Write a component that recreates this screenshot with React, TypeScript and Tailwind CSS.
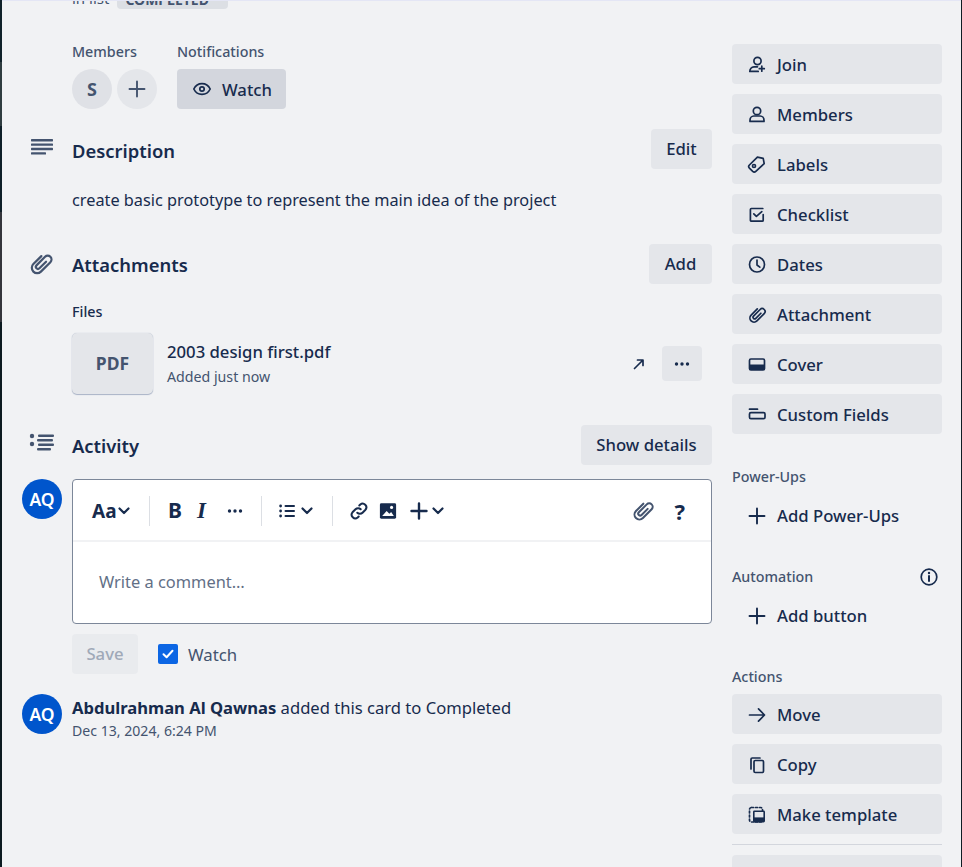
import type { ReactNode } from "react";

const s = { fill: "none", stroke: "currentColor", strokeWidth: 1.7, strokeLinecap: "round", strokeLinejoin: "round" } as const;

function Ico({ size = 20, children, className = "" }: { size?: number; children: ReactNode; className?: string }) {
  return (
    <svg width={size} height={size} viewBox="0 0 20 20" className={`shrink-0 ${className}`}>
      {children}
    </svg>
  );
}

const Clip = ({ size = 20, className = "" }: { size?: number; className?: string }) => (
  <Ico size={size} className={className}>
    <g transform="rotate(45 10 10)" {...s}>
      <path d="M5.9 5.5V14.2a4.1 4.1 0 0 0 8.2 0V3.9a2.9 2.9 0 0 0-5.8 0V13.2a1.6 1.6 0 0 0 3.2 0V6" />
    </g>
  </Ico>
);

const Plus = ({ size = 20 }: { size?: number }) => (
  <Ico size={size}>
    <path d="M10 2.5v15M2.5 10h15" {...s} strokeWidth={1.9} />
  </Ico>
);

const Chev = () => (
  <svg width="12" height="8" viewBox="0 0 12 8" className="shrink-0">
    <path d="M1.5 1.5 6 6l4.5-4.5" {...s} strokeWidth={2.2} />
  </svg>
);

const Dots = () => (
  <svg width="16" height="4" viewBox="0 0 16 4" className="shrink-0">
    <circle cx="2.5" cy="2" r="1.7" fill="currentColor" />
    <circle cx="8" cy="2" r="1.7" fill="currentColor" />
    <circle cx="13.5" cy="2" r="1.7" fill="currentColor" />
  </svg>
);

const sideActions: [string, ReactNode][] = [
  ["Join", <Ico><circle cx="10.5" cy="6" r="3.6" {...s} /><path d="M10.5 11.8H7C4.5 11.8 2.8 14 2.8 16.4h8.4M14.8 11.2v5M12.3 13.7h5" {...s} /></Ico>],
  ["Members", <Ico><circle cx="10" cy="6" r="3.7" {...s} /><path d="M6.8 11h6.4c2.2 0 3.8 2 3.8 4.2v1.2H3v-1.2C3 13 4.6 11 6.8 11z" {...s} /></Ico>],
  ["Labels", <Ico><path d="M10.4 2.2l5.8 1.2 1 5.2L8.8 16.4a2.3 2.3 0 0 1-3.1 0l-3.3-3.2a2.3 2.3 0 0 1 0-3.2z" {...s} /><circle cx="7" cy="11" r="1.5" {...s} /></Ico>],
  ["Checklist", <Ico><path d="M15.8 3.5H4.4a1 1 0 0 0-1 1v10.7a1 1 0 0 0 1 1h10.8a1 1 0 0 0 1-1V9.5" {...s} /><path d="M6.8 8.8l2.6 2.6 5.4-4.8" {...s} /></Ico>],
  ["Dates", <Ico><circle cx="10" cy="9.5" r="7.5" {...s} /><path d="M10 5v5l2.8 2.2" {...s} /></Ico>],
  ["Attachment", <Clip />],
  ["Cover", <Ico><rect x="2.5" y="4" width="15" height="11" rx="1.4" {...s} /><rect x="2.5" y="9.5" width="15" height="5.5" fill="currentColor" /></Ico>],
  ["Custom Fields", <Ico><path d="M2.5 4.2h8" {...s} /><rect x="2.5" y="7.6" width="15.5" height="6" rx="1.4" {...s} /></Ico>],
];

const moreActions: [string, ReactNode][] = [
  ["Move", <Ico><path d="M2.5 10h14.5M11.5 3.8 17.5 10l-6 6.2" {...s} /></Ico>],
  ["Copy", <Ico><rect x="7" y="5.5" width="9.5" height="12" rx="1.2" {...s} /><path d="M4 14V4.2A1.2 1.2 0 0 1 5.2 3H13" {...s} /></Ico>],
  ["Make template", <Ico><rect x="2.5" y="2.5" width="13" height="14.5" rx="2" {...s} strokeDasharray="2 2" /><rect x="6" y="5.5" width="12" height="12" rx="1.4" fill="currentColor" /><rect x="7.6" y="7" width="8.8" height="5.4" fill="#e4e6ea" /></Ico>],
];

function SideButton({ label, icon, filled = true }: { label: string; icon: ReactNode; filled?: boolean }) {
  return (
    <div className={`flex h-10 items-center gap-2.5 rounded-[4px] pl-[15px] text-[16.7px] font-medium text-[#172b4d] ${filled ? "bg-[#e4e6ea] pt-px" : ""}`}>
      {icon}
      <span>{label}</span>
    </div>
  );
}

function Pill({ children, className = "" }: { children: ReactNode; className?: string }) {
  return (
    <div className={`flex h-10 items-center justify-center rounded-[4px] bg-[#e4e6ea] text-[16.7px] font-medium text-[#172b4d] ${className}`}>
      {children}
    </div>
  );
}

function Avatar() {
  return (
    <div className="flex h-10 w-10 shrink-0 items-center justify-center rounded-full bg-[#0055cc] text-[17.5px] font-semibold text-white">
      AQ
    </div>
  );
}

function Sep({ className = "" }: { className?: string }) {
  return <div className={`h-[30px] w-px shrink-0 bg-[#dcdfe4] ${className}`} />;
}

function Toolbar() {
  return (
    <div className="flex h-[62px] items-center border-b-2 border-[#f1f2f4] pl-[19px] pt-[2px] text-[#172b4d]">
      <span className="w-[26px] text-[19px] font-bold">Aa</span>
      <Chev />
      <Sep className="ml-[19px]" />
      <span className="ml-[18px] w-[14px] text-[21px] font-bold">B</span>
      <span className="ml-[15px] w-[15px] font-['Liberation_Serif',serif] text-[23px] font-bold italic">I</span>
      <span className="ml-[15px]"><Dots /></span>
      <Sep className="ml-[18px] w-[2px]" />
      <span className="ml-[17px]">
        <svg width="17" height="14" viewBox="0 0 17 14">
          <g fill="currentColor">
            <circle cx="1.6" cy="2" r="1.4" />
            <circle cx="1.6" cy="7" r="1.4" />
            <circle cx="1.6" cy="12" r="1.4" />
            <rect x="5.5" y="1" width="10.5" height="2" rx="1" />
            <rect x="5.5" y="6" width="10.5" height="2" rx="1" />
            <rect x="5.5" y="11" width="10.5" height="2" rx="1" />
          </g>
        </svg>
      </span>
      <span className="ml-[5px]"><Chev /></span>
      <Sep className="ml-[19px]" />
      <span className="ml-[16px]">
        <Ico size={20}>
          <g {...s} strokeWidth={2}>
            <path d="M8.3 11.7a3.6 3.6 0 0 0 5.2 0l3-3a3.7 3.7 0 0 0-5.2-5.2l-1 1" />
            <path d="M11.7 8.3a3.6 3.6 0 0 0-5.2 0l-3 3a3.7 3.7 0 0 0 5.2 5.2l1-1" />
          </g>
        </Ico>
      </span>
      <span className="ml-[10px]">
        <Ico size={18}>
          <rect x="1" y="1.5" width="18" height="17" rx="1.6" fill="currentColor" />
          <path d="M3.5 15.5 8.5 10l3 3 2-2 3 4.5z" fill="#fff" />
          <circle cx="14" cy="6" r="1.7" fill="#fff" />
        </Ico>
      </span>
      <span className="ml-[12px]"><Ico size={20}><path d="M10 2.5v15M2.5 10h15" {...s} strokeWidth={2.4} /></Ico></span>
      <span className="ml-[3px]"><Chev /></span>
      <span className="ml-auto text-[#44546f]"><Clip size={24} /></span>
      <span className="ml-[20px] mr-[26px] text-[22px] font-bold">?</span>
    </div>
  );
}

function Main() {
  return (
    <main className="w-[710px] shrink-0 pl-[20px]">
      <div className="flex h-2 items-end overflow-hidden pl-[50px] text-[15px] text-[#44546f]">
        <span>in list</span>
        <span className="ml-[8px] h-5 w-[111px] rounded-[4px] bg-[#dcdfe4] px-2 text-[14px] font-bold text-[#44546f]">COMPLETED</span>
      </div>

      <div className="mt-[33px] flex gap-5 pl-[50px] text-[14.3px] font-medium text-[#44546f]">
        <div>
          <div className="h-5 leading-5">Members</div>
          <div className="mt-[7px] flex gap-[5px]">
            <div className="flex h-10 w-10 items-center justify-center rounded-full bg-[#dfe1e6] text-[18px] font-bold">S</div>
            <div className="flex h-10 w-10 items-center justify-center rounded-full bg-[#e4e6ea] text-[#44546f]"><Plus /></div>
          </div>
        </div>
        <div>
          <div className="h-5 leading-5">Notifications</div>
          <div className="mt-[7px] flex h-10 w-[109px] items-center gap-[10px] rounded-[4px] bg-[#d3d6dd] pl-[15px] text-[16.7px] text-[#172b4d]">
            <Ico>
              <path d="M1.8 10C3.5 6.5 6.5 4.6 10 4.6s6.5 1.9 8.2 5.4c-1.7 3.5-4.7 5.4-8.2 5.4S3.5 13.5 1.8 10z" {...s} />
              <circle cx="10" cy="10" r="2.2" {...s} />
            </Ico>
            <span className="pt-[2px]">Watch</span>
          </div>
        </div>
      </div>

      <div className="mt-5 flex h-10 items-center">
        <div className="w-[50px] pl-[8px] text-[#44546f]">
          <svg width="24" height="18" viewBox="0 0 24 18" className="mb-1">
            <g fill="currentColor">
              <rect x="1" y="1" width="22" height="2.4" rx=".6" />
              <rect x="1" y="5.4" width="22" height="2.4" rx=".6" />
              <rect x="1" y="9.8" width="22" height="2.4" rx=".6" />
              <rect x="1" y="14.2" width="15" height="2.4" rx=".6" />
            </g>
          </svg>
        </div>
        <h2 className="pt-[3px] text-[18.4px] font-semibold text-[#172b4d]">Description</h2>
        <Pill className="ml-auto w-[61px]">Edit</Pill>
      </div>
      <p className="mt-[19px] h-6 pl-[50px] text-[16.3px] leading-6 text-[#172b4d]">create basic prototype to represent the main idea of the project</p>

      <div className="mt-[32px] flex h-10 items-center">
        <div className="w-[50px] pl-[6px] text-[#44546f]"><Clip size={26} /></div>
        <h2 className="pt-[2px] text-[18.4px] font-semibold text-[#172b4d]">Attachments</h2>
        <Pill className="ml-auto w-[63px]">Add</Pill>
      </div>
      <div className="mt-[18px] h-5 pl-[50px] text-[14.3px] font-medium leading-5 text-[#172b4d]">Files</div>
      <div className="mt-[11px] flex h-[61px] pl-[50px]">
        <div className="flex w-[81px] shrink-0 items-center justify-center rounded-[5px] bg-[#e4e6ea] text-[17.5px] font-bold text-[#44546f] shadow-[0_1px_1px_#a9b3c6,0_0_1px_#a9b3c6]">PDF</div>
        <div className="ml-[14px] text-[#172b4d]">
          <div className="mt-[7px] text-[16.7px] font-medium leading-6">2003 design first.pdf</div>
          <div className="mt-px text-[14.2px] leading-6 text-[#44546f]">Added just now</div>
        </div>
        <div className="ml-auto mr-[10px] mt-[13px] flex h-[35px] items-center text-[#172b4d]">
          <svg width="12" height="12" viewBox="0 0 12 12">
            <path d="M1.5 10.5 9.5 2.5M4.5 2h5.5v5.5" {...s} strokeWidth={1.7} />
          </svg>
          <div className="ml-[17px] flex h-[35px] w-10 items-center justify-center rounded-[4px] bg-[#e4e6ea]"><Dots /></div>
        </div>
      </div>

      <div className="mt-[31px] flex h-10 items-center">
        <div className="w-[50px] pl-[7px] text-[#44546f]">
          <svg width="26" height="20" viewBox="0 0 26 20" className="mb-1">
            <g fill="currentColor">
              <circle cx="3" cy="3" r="2.2" />
              <circle cx="3" cy="11" r="2.2" />
              <rect x="9" y="1.5" width="16" height="2.4" rx="1" />
              <rect x="8" y="6" width="16" height="2.4" rx="1" />
              <rect x="9" y="10.5" width="16" height="2.4" rx="1" />
              <rect x="8" y="15" width="14" height="2.4" rx="1" />
            </g>
          </svg>
        </div>
        <h2 className="pt-px text-[18.4px] font-semibold text-[#172b4d]">Activity</h2>
        <Pill className="ml-auto w-[131px]">Show details</Pill>
      </div>

      <div className="mt-[14px] flex gap-[10px]">
        <Avatar />
        <div className="h-[145px] flex-1 overflow-hidden rounded-[4px] border border-[#7c8799] bg-white">
          <Toolbar />
          <div className="pl-[26px] pt-[28px] text-[16.4px] leading-6 text-[#626f86]">Write a comment…</div>
        </div>
      </div>

      <div className="mt-[10px] flex h-10 items-center pl-[50px]">
        <div className="flex h-10 w-[66px] items-center justify-center rounded-[4px] bg-[#e9ebee] text-[16.7px] font-medium text-[#a0a9b8]">Save</div>
        <div className="ml-5 flex h-5 w-5 items-center justify-center rounded-[2px] bg-[#0c66e4]">
          <svg width="14" height="12" viewBox="0 0 14 12">
            <path d="M2.5 6.2 5.6 9.2 11.5 2.8" {...s} stroke="#fff" strokeWidth={2} />
          </svg>
        </div>
        <span className="ml-[10px] pt-px text-[16.8px] text-[#44546f]">Watch</span>
      </div>

      <div className="mt-5 flex gap-[10px]">
        <Avatar />
        <div>
          <div className="h-[26px] text-[16.6px] leading-7 text-[#172b4d]">
            <span className="font-bold">Abdulrahman Al Qawnas</span> added this card to Completed
          </div>
          <div className="mt-px text-[14.1px] leading-5 text-[#44546f]">Dec 13, 2024, 6:24 PM</div>
        </div>
      </div>
    </main>
  );
}

function Sidebar() {
  return (
    <aside className="ml-5 w-[210px] shrink-0 pt-[43px]">
      <div className="flex flex-col gap-2.5">
        {sideActions.map(([label, icon]) => <SideButton key={label} label={label} icon={icon} />)}
      </div>
      <div className="mt-[33px] h-5 text-[14.3px] font-medium leading-5 text-[#44546f]">Power-Ups</div>
      <div className="mt-[9px]"><SideButton label="Add Power-Ups" icon={<Plus />} filled={false} /></div>
      <div className="mt-[31px] flex h-5 items-center justify-between pr-[3px] text-[14.3px] font-medium text-[#44546f]">
        Automation
        <span className="text-[#172b4d]">
          <Ico>
            <circle cx="10" cy="10" r="7.8" {...s} />
            <path d="M10 9v5" {...s} strokeWidth={2} />
            <circle cx="10" cy="6" r="1.2" fill="currentColor" />
          </Ico>
        </span>
      </div>
      <div className="mt-[9px]"><SideButton label="Add button" icon={<Plus />} filled={false} /></div>
      <div className="mt-[31px] h-5 text-[14.3px] font-medium leading-5 text-[#44546f]">Actions</div>
      <div className="mt-[7px] flex flex-col gap-2.5">
        {moreActions.map(([label, icon]) => <SideButton key={label} label={label} icon={icon} />)}
      </div>
      <div className="mt-2.5 h-px bg-[#d3d6dd]" />
      <div className="mt-2.5 h-10 rounded-[4px] bg-[#e4e6ea]" />
    </aside>
  );
}

export default function App() {
  return (
    <div className="flex h-screen overflow-hidden bg-[#0f1f26] font-['Noto_Sans',sans-serif]">
      <div className="flex w-[2px] shrink-0 flex-col">
        <div className="h-[62px] bg-[#10222a]" />
        <div className="h-16 bg-[#2f3d40]" />
        <div className="h-[86px] bg-[#0e1f28]" />
        <div className="h-[110px] bg-[#34353b]" />
        <div className="flex-1 bg-[#0c1a20]" />
      </div>
      <div className="flex flex-1 border-t border-[#e4e6f5] bg-[#f1f2f4]">
        <Main />
        <Sidebar />
      </div>
      <div className="w-px shrink-0 bg-[#101c24]" />
    </div>
  );
}
